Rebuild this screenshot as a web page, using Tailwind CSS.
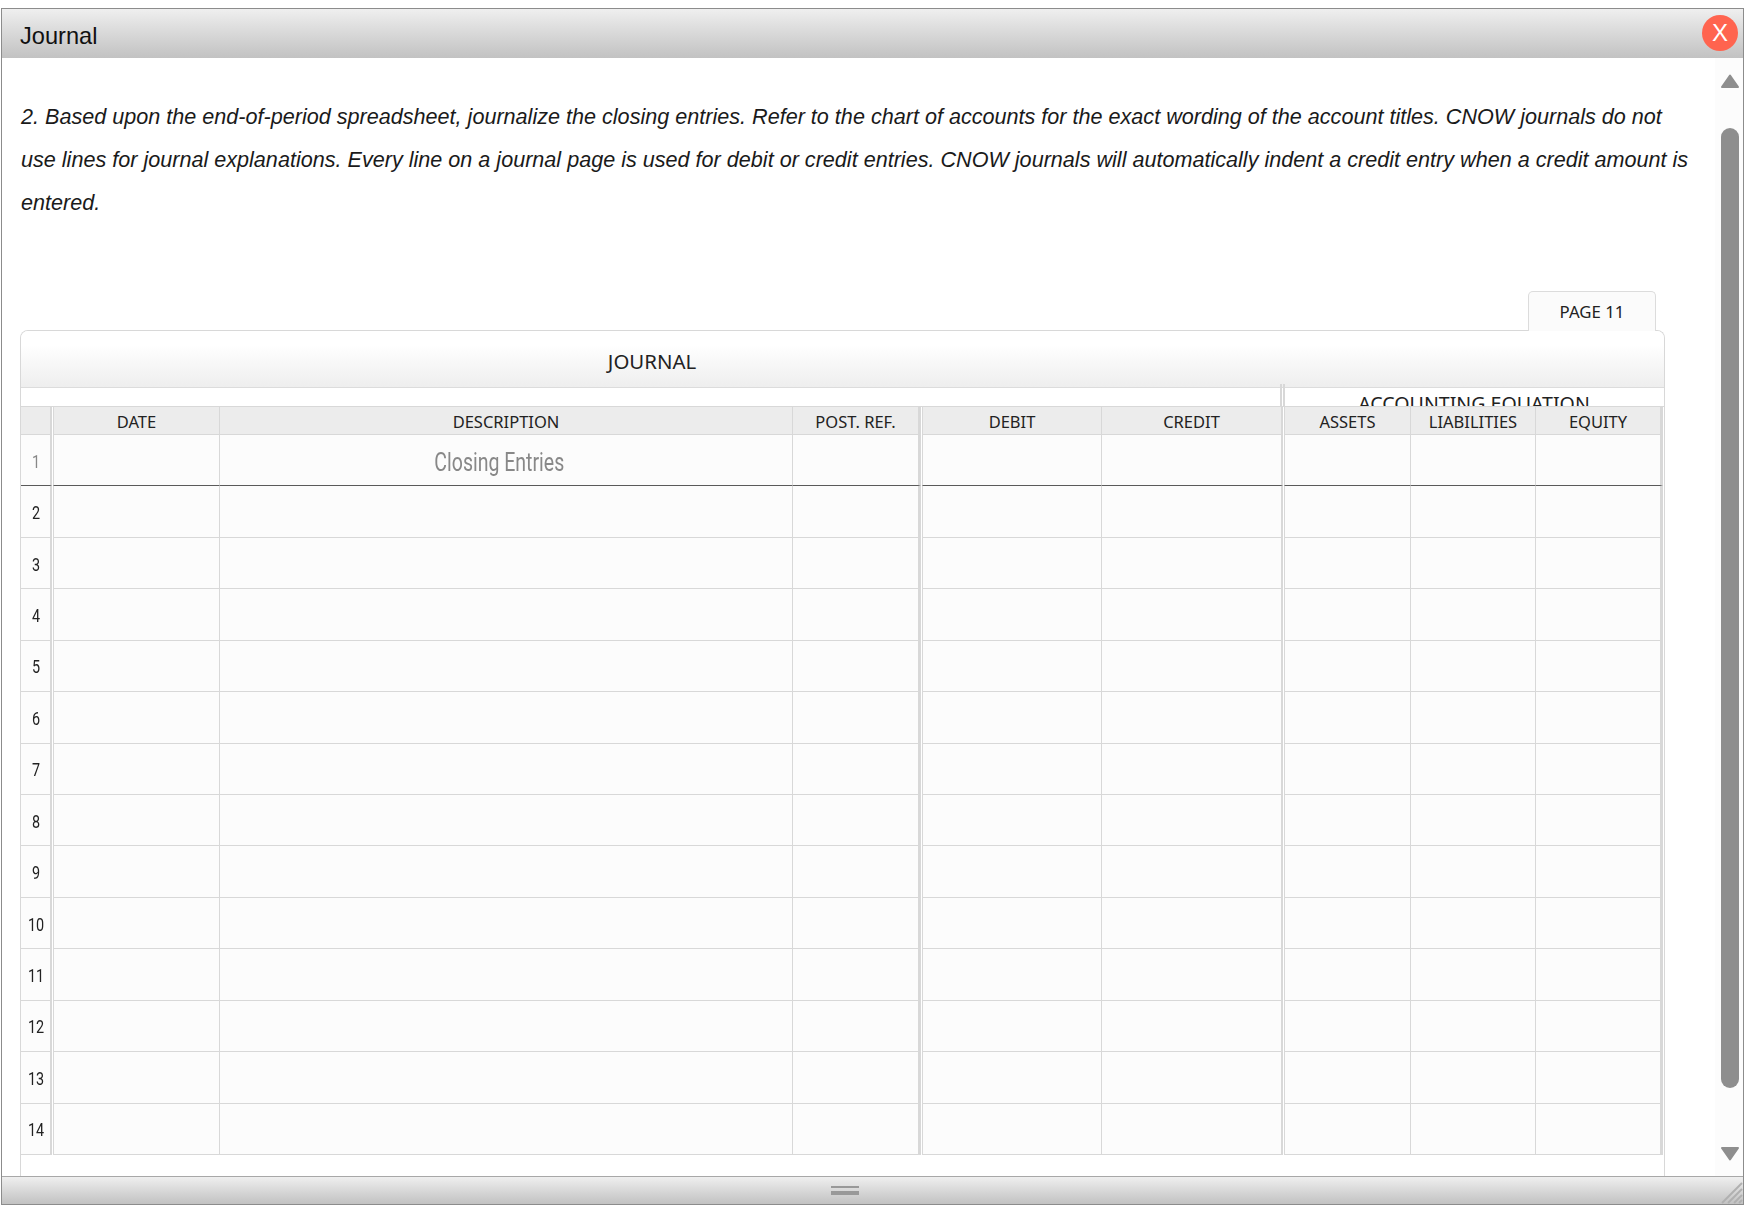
<!DOCTYPE html>
<html lang="en">
<head>
<meta charset="utf-8">
<title>Journal</title>
<script src="https://cdn.jsdelivr.net/npm/@tailwindcss/browser@4"></script>
</head>
<body class="bg-white">
<div class="w-[1750px] h-[1206px] pt-2 pl-px overflow-hidden font-['Liberation_Sans',Arial,sans-serif]">
  <div class="w-[1743px] h-[1197px] border border-[#8c8c8c] flex flex-col bg-white">
    <!-- title bar -->
    <div class="h-[49px] shrink-0 relative bg-gradient-to-b from-[#efefef] to-[#c2c2c2] flex items-center pl-[18px] text-[23.6px] text-[#111]">
      <span class="mt-[7px]">Journal</span>
      <button class="absolute right-[5px] top-[6px] w-9 h-9 rounded-full bg-[#ff644f] text-white text-[24px] leading-none flex items-center justify-center">X</button>
    </div>
    <!-- body -->
    <div class="flex-1 flex min-h-0">
      <div class="w-[1713px] pl-[18px] flex flex-col min-h-0">
        <p class="pl-px pt-[37px] text-[21.6px] leading-[43px] italic text-[#1a1a1a] whitespace-nowrap">2. Based upon the end-of-period spreadsheet, journalize the closing entries. Refer to the chart of accounts for the exact wording of the account titles. CNOW journals do not<br>use lines for journal explanations. Every line on a journal page is used for debit or credit entries. CNOW journals will automatically indent a credit entry when a credit amount is<br>entered.</p>
        <!-- tab -->
        <div class="mt-[67px] flex justify-end pr-[9px] w-[1645px] font-['Noto_Sans',sans-serif] relative z-10 -mb-px">
          <div class="w-[128px] h-10 rounded-t-[5px] border border-b-0 border-[#dcdcdc] bg-[#fbfbfb] flex items-center justify-center text-[16.8px] text-[#222]">PAGE 11</div>
        </div>
        <!-- journal card -->
        <div class="w-[1645px] flex-1 min-h-0 border border-b-0 border-[#d8d8d8] rounded-t-lg overflow-hidden font-['Noto_Sans',sans-serif] bg-white">
          <div class="h-[57px] border-b border-[#dcdcdc] bg-gradient-to-b from-white from-25% to-[#eeeeee] flex items-center">
            <div class="w-[1262px] text-center text-[20.4px] text-[#222] pt-[5px]">JOURNAL</div>
          </div>
          <div class="h-[18px] relative flex">
            <div class="w-[1260px]"></div>
            <div class="flex-1 overflow-hidden text-center text-[19.6px] leading-[26px] pt-[3px] pl-[3px] text-[#222]">ACCOUNTING EQUATION</div>
            <div class="absolute left-[1259px] -top-[4px] h-[22px] w-[5px] border-x-2 border-[#d8d8d8]"></div>
          </div>
          <!-- table -->
          <div class="grid grid-cols-[31px_1px_167px_573px_128px_1px_180px_181px_1px_127px_125px_127px] grid-rows-[28px_repeat(14,minmax(0,1fr))] h-[749px] border-t border-[#d8d8d8] text-[16.5px] text-[#222] *:border-b *:border-[#d8d8d8] *:bg-[#fcfcfc] *:flex *:items-center *:justify-center">
            <!-- head -->
            <div class="bg-[#ececec]! border-r-2"></div><div class="bg-white! border-b-0!"></div>
            <div class="bg-[#ececec]! border-l border-r pt-[3px]">DATE</div><div class="bg-[#ececec]! border-r pt-[3px]">DESCRIPTION</div><div class="bg-[#ececec]! border-r-[3px] pt-[3px]">POST. REF.</div><div class="bg-white! border-b-0!"></div>
            <div class="bg-[#ececec]! border-l border-r pt-[3px]">DEBIT</div><div class="bg-[#ececec]! border-r-2 pt-[3px]">CREDIT</div><div class="bg-white! border-b-0!"></div>
            <div class="bg-[#ececec]! border-l border-r pt-[3px]">ASSETS</div><div class="bg-[#ececec]! border-r pt-[3px]">LIABILITIES</div><div class="bg-[#ececec]! border-r-[3px] pt-[3px]">EQUITY</div>
            <!-- row 1 -->
            <div class="border-r-2 border-b-[#5a5a5a]! text-[#888] font-['Roboto',sans-serif] text-[18px] pt-[2px] pl-[2px]"><span class="inline-block scale-x-[0.8]">1</span></div><div class="bg-white! border-b-0!"></div>
            <div class="border-l border-r border-b-[#5a5a5a]!"></div><div class="border-r border-b-[#5a5a5a]! pr-[14px] pt-[6px] text-[#888] font-['Roboto',sans-serif] text-[25px]"><span class="inline-block scale-x-[0.78]">Closing Entries</span></div><div class="border-r-[3px] border-b-[#5a5a5a]!"></div><div class="bg-white! border-b-0!"></div>
            <div class="border-l border-r border-b-[#5a5a5a]!"></div><div class="border-r-2 border-b-[#5a5a5a]!"></div><div class="bg-white! border-b-0!"></div>
            <div class="border-l border-r border-b-[#5a5a5a]!"></div><div class="border-r border-b-[#5a5a5a]!"></div><div class="border-r-[3px] border-b-[#5a5a5a]!"></div>
            <!-- row 2 -->
            <div class="border-r-2 font-['Roboto',sans-serif] text-[18px] pt-[2px] pl-[2px]"><span class="inline-block scale-x-[0.8]">2</span></div><div class="bg-white! border-b-0!"></div>
            <div class="border-l border-r"></div><div class="border-r"></div><div class="border-r-[3px]"></div><div class="bg-white! border-b-0!"></div>
            <div class="border-l border-r"></div><div class="border-r-2"></div><div class="bg-white! border-b-0!"></div>
            <div class="border-l border-r"></div><div class="border-r"></div><div class="border-r-[3px]"></div>
            <!-- row 3 -->
            <div class="border-r-2 font-['Roboto',sans-serif] text-[18px] pt-[2px] pl-[2px]"><span class="inline-block scale-x-[0.8]">3</span></div><div class="bg-white! border-b-0!"></div>
            <div class="border-l border-r"></div><div class="border-r"></div><div class="border-r-[3px]"></div><div class="bg-white! border-b-0!"></div>
            <div class="border-l border-r"></div><div class="border-r-2"></div><div class="bg-white! border-b-0!"></div>
            <div class="border-l border-r"></div><div class="border-r"></div><div class="border-r-[3px]"></div>
            <!-- row 4 -->
            <div class="border-r-2 font-['Roboto',sans-serif] text-[18px] pt-[2px] pl-[2px]"><span class="inline-block scale-x-[0.8]">4</span></div><div class="bg-white! border-b-0!"></div>
            <div class="border-l border-r"></div><div class="border-r"></div><div class="border-r-[3px]"></div><div class="bg-white! border-b-0!"></div>
            <div class="border-l border-r"></div><div class="border-r-2"></div><div class="bg-white! border-b-0!"></div>
            <div class="border-l border-r"></div><div class="border-r"></div><div class="border-r-[3px]"></div>
            <!-- row 5 -->
            <div class="border-r-2 font-['Roboto',sans-serif] text-[18px] pt-[2px] pl-[2px]"><span class="inline-block scale-x-[0.8]">5</span></div><div class="bg-white! border-b-0!"></div>
            <div class="border-l border-r"></div><div class="border-r"></div><div class="border-r-[3px]"></div><div class="bg-white! border-b-0!"></div>
            <div class="border-l border-r"></div><div class="border-r-2"></div><div class="bg-white! border-b-0!"></div>
            <div class="border-l border-r"></div><div class="border-r"></div><div class="border-r-[3px]"></div>
            <!-- row 6 -->
            <div class="border-r-2 font-['Roboto',sans-serif] text-[18px] pt-[2px] pl-[2px]"><span class="inline-block scale-x-[0.8]">6</span></div><div class="bg-white! border-b-0!"></div>
            <div class="border-l border-r"></div><div class="border-r"></div><div class="border-r-[3px]"></div><div class="bg-white! border-b-0!"></div>
            <div class="border-l border-r"></div><div class="border-r-2"></div><div class="bg-white! border-b-0!"></div>
            <div class="border-l border-r"></div><div class="border-r"></div><div class="border-r-[3px]"></div>
            <!-- row 7 -->
            <div class="border-r-2 font-['Roboto',sans-serif] text-[18px] pt-[2px] pl-[2px]"><span class="inline-block scale-x-[0.8]">7</span></div><div class="bg-white! border-b-0!"></div>
            <div class="border-l border-r"></div><div class="border-r"></div><div class="border-r-[3px]"></div><div class="bg-white! border-b-0!"></div>
            <div class="border-l border-r"></div><div class="border-r-2"></div><div class="bg-white! border-b-0!"></div>
            <div class="border-l border-r"></div><div class="border-r"></div><div class="border-r-[3px]"></div>
            <!-- row 8 -->
            <div class="border-r-2 font-['Roboto',sans-serif] text-[18px] pt-[2px] pl-[2px]"><span class="inline-block scale-x-[0.8]">8</span></div><div class="bg-white! border-b-0!"></div>
            <div class="border-l border-r"></div><div class="border-r"></div><div class="border-r-[3px]"></div><div class="bg-white! border-b-0!"></div>
            <div class="border-l border-r"></div><div class="border-r-2"></div><div class="bg-white! border-b-0!"></div>
            <div class="border-l border-r"></div><div class="border-r"></div><div class="border-r-[3px]"></div>
            <!-- row 9 -->
            <div class="border-r-2 font-['Roboto',sans-serif] text-[18px] pt-[2px] pl-[2px]"><span class="inline-block scale-x-[0.8]">9</span></div><div class="bg-white! border-b-0!"></div>
            <div class="border-l border-r"></div><div class="border-r"></div><div class="border-r-[3px]"></div><div class="bg-white! border-b-0!"></div>
            <div class="border-l border-r"></div><div class="border-r-2"></div><div class="bg-white! border-b-0!"></div>
            <div class="border-l border-r"></div><div class="border-r"></div><div class="border-r-[3px]"></div>
            <!-- row 10 -->
            <div class="border-r-2 font-['Roboto',sans-serif] text-[18px] pt-[2px] pl-[2px]"><span class="inline-block scale-x-[0.8]">10</span></div><div class="bg-white! border-b-0!"></div>
            <div class="border-l border-r"></div><div class="border-r"></div><div class="border-r-[3px]"></div><div class="bg-white! border-b-0!"></div>
            <div class="border-l border-r"></div><div class="border-r-2"></div><div class="bg-white! border-b-0!"></div>
            <div class="border-l border-r"></div><div class="border-r"></div><div class="border-r-[3px]"></div>
            <!-- row 11 -->
            <div class="border-r-2 font-['Roboto',sans-serif] text-[18px] pt-[2px] pl-[2px]"><span class="inline-block scale-x-[0.8]">11</span></div><div class="bg-white! border-b-0!"></div>
            <div class="border-l border-r"></div><div class="border-r"></div><div class="border-r-[3px]"></div><div class="bg-white! border-b-0!"></div>
            <div class="border-l border-r"></div><div class="border-r-2"></div><div class="bg-white! border-b-0!"></div>
            <div class="border-l border-r"></div><div class="border-r"></div><div class="border-r-[3px]"></div>
            <!-- row 12 -->
            <div class="border-r-2 font-['Roboto',sans-serif] text-[18px] pt-[2px] pl-[2px]"><span class="inline-block scale-x-[0.8]">12</span></div><div class="bg-white! border-b-0!"></div>
            <div class="border-l border-r"></div><div class="border-r"></div><div class="border-r-[3px]"></div><div class="bg-white! border-b-0!"></div>
            <div class="border-l border-r"></div><div class="border-r-2"></div><div class="bg-white! border-b-0!"></div>
            <div class="border-l border-r"></div><div class="border-r"></div><div class="border-r-[3px]"></div>
            <!-- row 13 -->
            <div class="border-r-2 font-['Roboto',sans-serif] text-[18px] pt-[2px] pl-[2px]"><span class="inline-block scale-x-[0.8]">13</span></div><div class="bg-white! border-b-0!"></div>
            <div class="border-l border-r"></div><div class="border-r"></div><div class="border-r-[3px]"></div><div class="bg-white! border-b-0!"></div>
            <div class="border-l border-r"></div><div class="border-r-2"></div><div class="bg-white! border-b-0!"></div>
            <div class="border-l border-r"></div><div class="border-r"></div><div class="border-r-[3px]"></div>
            <!-- row 14 -->
            <div class="border-r-2 font-['Roboto',sans-serif] text-[18px] pt-[2px] pl-[2px]"><span class="inline-block scale-x-[0.8]">14</span></div><div class="bg-white! border-b-0!"></div>
            <div class="border-l border-r"></div><div class="border-r"></div><div class="border-r-[3px]"></div><div class="bg-white! border-b-0!"></div>
            <div class="border-l border-r"></div><div class="border-r-2"></div><div class="bg-white! border-b-0!"></div>
            <div class="border-l border-r"></div><div class="border-r"></div><div class="border-r-[3px]"></div>
          </div>
        </div>
      </div>
      <!-- scrollbar -->
      <div class="flex-1 bg-[#fcfcfc] flex flex-col items-center pt-4 pb-[15px]">
        <svg class="w-[18px] h-[14px] shrink-0 ml-[1px]" viewBox="0 0 18 14"><path d="M9 1.5 L17 13 H1 Z" fill="#8e8e8e" stroke="#8e8e8e" stroke-width="2" stroke-linejoin="round"/></svg>
        <div class="w-[18px] flex-1 mt-[40px] mb-[59px] rounded-[9px] bg-[#8e8e8e] ml-[1px]"></div>
        <svg class="w-[18px] h-[14px] shrink-0 ml-[1px]" viewBox="0 0 18 14"><path d="M1 1 H17 L9 12.5 Z" fill="#8e8e8e" stroke="#8e8e8e" stroke-width="2" stroke-linejoin="round"/></svg>
      </div>
    </div>
    <!-- footer -->
    <div class="h-[28px] shrink-0 relative border-t border-[#a8a8a8] bg-gradient-to-b from-[#efefef] to-[#c2c2c2] flex items-center justify-center pr-[56px]">
      <div class="w-7 h-[9px] flex flex-col justify-between blur-[0.5px] -mt-[1px]">
        <div class="h-[2px] bg-[#999]"></div>
        <div class="h-[4px] bg-[#999]"></div>
      </div>
      <svg class="absolute right-0 bottom-0 w-[22px] h-[22px]" viewBox="0 0 22 22" fill="none" stroke="#b0b0b0" stroke-width="2"><path d="M1 21 L21 1"/><path d="M7 21 L21 7"/><path d="M13 21 L21 13"/><path d="M18 21 L21 18"/></svg>
    </div>
  </div>
</div>
</body>
</html>
